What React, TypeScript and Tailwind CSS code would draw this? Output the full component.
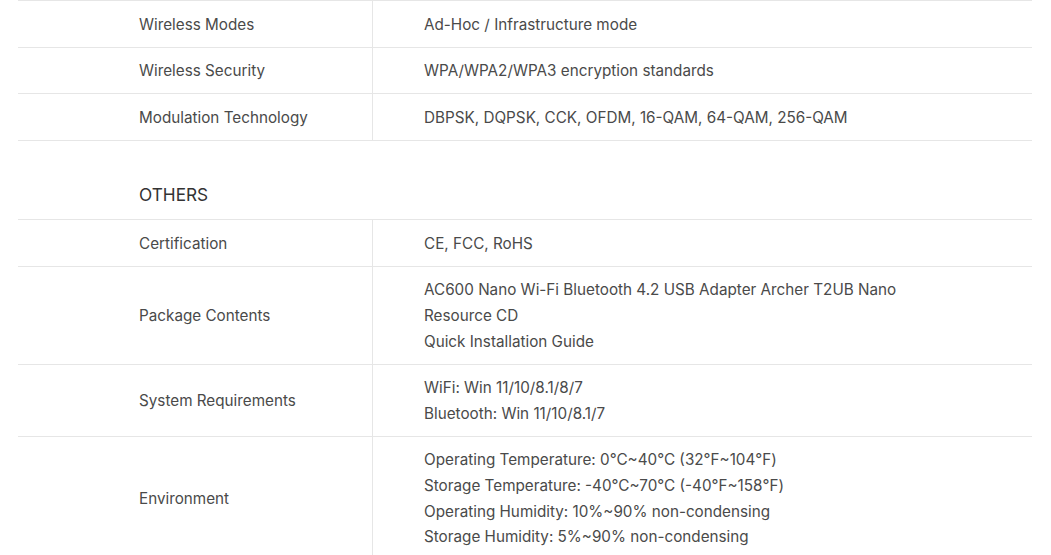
const wireless = [
  { label: "Wireless Modes", values: ["Ad-Hoc / Infrastructure mode"] },
  { label: "Wireless Security", values: ["WPA/WPA2/WPA3 encryption standards"] },
  {
    label: "Modulation Technology",
    values: ["DBPSK, DQPSK, CCK, OFDM, 16-QAM, 64-QAM, 256-QAM"],
  },
];

const others = [
  { label: "Certification", values: ["CE, FCC, RoHS"] },
  {
    label: "Package Contents",
    values: [
      "AC600 Nano Wi-Fi Bluetooth 4.2 USB Adapter Archer T2UB Nano",
      "Resource CD",
      "Quick Installation Guide",
    ],
  },
  {
    label: "System Requirements",
    values: ["WiFi: Win 11/10/8.1/8/7", "Bluetooth: Win 11/10/8.1/7"],
  },
  {
    label: "Environment",
    values: [
      "Operating Temperature: 0℃~40℃ (32℉~104℉)",
      "Storage Temperature: -40℃~70℃ (-40℉~158℉)",
      "Operating Humidity: 10%~90% non-condensing",
      "Storage Humidity: 5%~90% non-condensing",
    ],
  },
];

type Row = { label: string; values: string[] };

const SpecTable = ({ rows }: { rows: Row[] }) => {
  return (
    <div className="border-b border-[#e6e6e6]">
      {rows.map((row) => (
        <div key={row.label} className="flex border-t border-[#e6e6e6]">
          <div className="w-[355px] shrink-0 flex items-center border-r border-[#e6e6e6] pl-[121px] pt-[10.5px] pb-[9.5px]">
            {row.label}
          </div>
          <div className="flex-1 pl-[51px] pt-[10.5px] pb-[9.5px]">
            {row.values.map((v) => (
              <div key={v}>{v}</div>
            ))}
          </div>
        </div>
      ))}
    </div>
  );
};

const App = () => {
  return (
    <div className="bg-white min-h-screen font-['Inter',sans-serif] text-[15.25px] leading-[25.6px] text-[#4a4a4a]">
      <div className="ml-[18px] w-[1014px]">
        <SpecTable rows={wireless} />
        <h3 className="pl-[121px] pt-[40.5px] pb-[11px] text-[17.25px] leading-[27px] text-[#333]">
          OTHERS
        </h3>
        <SpecTable rows={others} />
      </div>
    </div>
  );
};

export default App;
